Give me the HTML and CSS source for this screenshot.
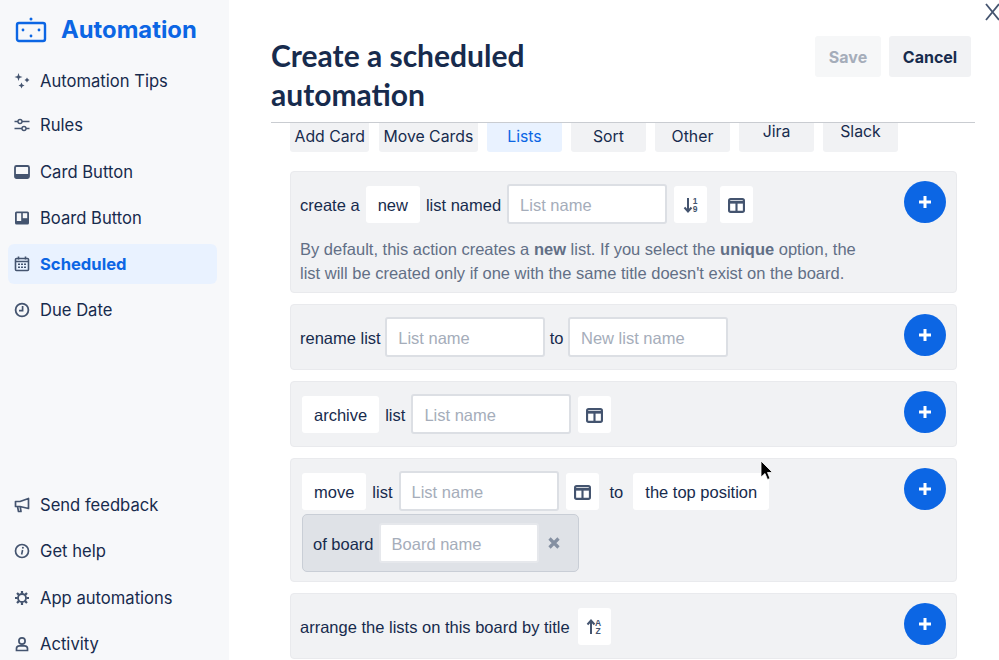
FILE: index.html
```html
<!DOCTYPE html>
<html lang="en">
<head>
<meta charset="utf-8">
<title>Create a scheduled automation</title>
<link rel="stylesheet" href="styles.css">
</head>
<body>
<aside class="sidebar">
  <div class="brand">
    <svg class="brand-icon" viewBox="0 0 32 26" width="32" height="26"><rect x="2" y="6" width="28" height="18" rx="2" fill="none" stroke="#0c66e4" stroke-width="2.4"/><circle cx="16" cy="2" r="1.5" fill="#0c66e4"/><circle cx="8" cy="13" r="1.4" fill="#0c66e4"/><circle cx="24" cy="13" r="1.4" fill="#0c66e4"/><circle cx="16" cy="19" r="1.4" fill="#0c66e4"/></svg>
    <span class="brand-name">Automation</span>
  </div>
  <nav class="nav">
    <a class="nav-item"><svg viewBox="0 0 16 16" width="16" height="16"><path d="M4.500 0 L5.500 3 L8.500 4 L5.500 5 L4.500 8 L3.500 5 L0.500 4 L3.500 3Z M13 4.500 L13.900 6.100 L15.500 7 L13.900 7.900 L13 9.500 L12.100 7.900 L10.500 7 L12.100 6.100Z M7.500 9.500 L8.400 11.600 L10.500 12.500 L8.400 13.400 L7.500 15.500 L6.600 13.400 L4.500 12.500 L6.600 11.600Z" fill="#44546f"/></svg>Automation Tips</a>
    <a class="nav-item"><svg viewBox="0 0 16 16" width="16" height="16"><path d="M0.500 4.500H4M8 4.500H15.500M0.500 11.500H8M12 11.500H15.500" stroke="#44546f" stroke-width="1.600" fill="none"/><circle cx="6" cy="4.500" r="2" fill="none" stroke="#44546f" stroke-width="1.400"/><circle cx="10" cy="11.500" r="2" fill="none" stroke="#44546f" stroke-width="1.400"/></svg>Rules</a>
    <a class="nav-item"><svg viewBox="0 0 16 16" width="16" height="16"><rect x="1" y="2" width="14" height="12" rx="1.500" fill="none" stroke="#44546f" stroke-width="1.800"/><path d="M1 10H15V14H1Z" fill="#44546f"/></svg>Card Button</a>
    <a class="nav-item"><svg viewBox="0 0 16 16" width="16" height="16"><rect x="1" y="1.500" width="14" height="13" rx="1.500" fill="#44546f"/><rect x="2.800" y="3.200" width="4.400" height="7.800" fill="#f7f8fa"/><rect x="8.800" y="3.200" width="4.400" height="5" fill="#f7f8fa"/></svg>Board Button</a>
    <a class="nav-item is-active"><svg viewBox="0 0 16 16" width="16" height="16"><rect x="1.500" y="2.500" width="13" height="12" rx="1" fill="none" stroke="#44546f" stroke-width="1.600"/><path d="M4.500 0.500V3.500M11.500 0.500V3.500M1.500 5.500H14.500" stroke="#44546f" stroke-width="1.600"/><path d="M4 7.500h2v1.500H4zM7 7.500h2v1.500H7zM10 7.500h2v1.500h-2zM4 10.500h2V12H4zM7 10.500h2V12H7zM10 10.500h2V12h-2z" fill="#44546f"/></svg>Scheduled</a>
    <a class="nav-item"><svg viewBox="0 0 16 16" width="16" height="16"><circle cx="8" cy="8" r="6.400" fill="none" stroke="#44546f" stroke-width="1.800"/><path d="M8.600 4V8.700H5" fill="none" stroke="#44546f" stroke-width="1.700"/></svg>Due Date</a>
  </nav>
  <nav class="nav nav-bottom">
    <a class="nav-item"><svg viewBox="0 0 16 16" width="16" height="16"><path d="M14.500 1.500V11.500L6 9.500H1.500V4.500H6Z M3.500 9.500L4.500 14.500H7L6.200 9.700" fill="none" stroke="#44546f" stroke-width="1.700" stroke-linejoin="round"/></svg>Send feedback</a>
    <a class="nav-item"><svg viewBox="0 0 16 16" width="16" height="16"><circle cx="8" cy="8" r="6.500" fill="none" stroke="#44546f" stroke-width="1.700"/><path d="M8.600 7L7.600 11.500" stroke="#44546f" stroke-width="1.600"/><circle cx="8.900" cy="4.800" r="1" fill="#44546f"/></svg>Get help</a>
    <a class="nav-item"><svg viewBox="0 0 16 16" width="16" height="16"><circle cx="8" cy="8" r="4" fill="none" stroke="#44546f" stroke-width="1.800"/><path d="M8 1V3.600M8 12.400V15M1 8H3.600M12.400 8H15M3 3L4.900 4.900M11.100 11.100L13 13M13 3L11.100 4.900M4.900 11.100L3 13" stroke="#44546f" stroke-width="2.200"/></svg>App automations</a>
    <a class="nav-item"><svg viewBox="0 0 16 16" width="16" height="16"><circle cx="8" cy="5" r="3.100" fill="none" stroke="#44546f" stroke-width="1.700"/><path d="M2.500 14.500V12.600C2.500 10.900 3.900 9.800 5.500 9.800H10.500C12.100 9.800 13.500 10.900 13.500 12.600V14.500Z" fill="none" stroke="#44546f" stroke-width="1.700"/></svg>Activity</a>
  </nav>
</aside>

<main class="main">
  <header class="header">
    <h1 class="title">Create a scheduled automation</h1>
    <div class="actions">
      <button class="btn btn-save">Save</button>
      <button class="btn btn-cancel">Cancel</button>
    </div>
  </header>

  <div class="tabs">
    <span class="tab">Add Card</span>
    <span class="tab">Move Cards</span>
    <span class="tab is-active">Lists</span>
    <span class="tab">Sort</span>
    <span class="tab">Other</span>
    <span class="tab tab-raised">Jira</span>
    <span class="tab tab-raised">Slack</span>
  </div>

  <div class="cards">
    <section class="card">
      <div class="card-body">
        <div class="row">
          <span>create a</span>
          <span class="chip">new</span>
          <span>list named</span>
          <span class="field">List name</span>
          <span class="icon-btn"><svg viewBox="0 0 16 18" width="16" height="18"><path d="M5 2V15M1.500 11.500L5 15.500L8.500 11.500" fill="none" stroke="#44546f" stroke-width="2"/><text x="12" y="7.500" class="mini">1</text><text x="12" y="16" class="mini">9</text></svg></span>
          <span class="icon-btn icon-btn-far"><svg viewBox="0 0 16 14" width="17" height="15"><rect x="1" y="1" width="14" height="12" rx="1.500" fill="none" stroke="#44546f" stroke-width="2"/><path d="M1 4H15" stroke="#44546f" stroke-width="2.500"/><path d="M8 4V13" stroke="#44546f" stroke-width="2"/></svg></span>
        </div>
        <p class="note">By default, this action creates a <b>new</b> list. If you select the <b>unique</b> option, the list will be created only if one with the same title doesn't exist on the board.</p>
      </div>
      <button class="add"><svg viewBox="0 0 14 14" width="14" height="14"><path d="M7 1V13M1 7H13" stroke="#fff" stroke-width="3"/></svg></button>
    </section>

    <section class="card">
      <div class="card-body">
        <div class="row row-tight">
          <span>rename list</span>
          <span class="field">List name</span>
          <span>to</span>
          <span class="field">New list name</span>
        </div>
      </div>
      <button class="add"><svg viewBox="0 0 14 14" width="14" height="14"><path d="M7 1V13M1 7H13" stroke="#fff" stroke-width="3"/></svg></button>
    </section>

    <section class="card">
      <div class="card-body">
        <div class="row row-inset">
          <span class="chip">archive</span>
          <span>list</span>
          <span class="field">List name</span>
          <span class="icon-btn"><svg viewBox="0 0 16 14" width="17" height="15"><rect x="1" y="1" width="14" height="12" rx="1.500" fill="none" stroke="#44546f" stroke-width="2"/><path d="M1 4H15" stroke="#44546f" stroke-width="2.500"/><path d="M8 4V13" stroke="#44546f" stroke-width="2"/></svg></span>
        </div>
      </div>
      <button class="add"><svg viewBox="0 0 14 14" width="14" height="14"><path d="M7 1V13M1 7H13" stroke="#fff" stroke-width="3"/></svg></button>
    </section>

    <section class="card">
      <div class="card-body">
        <div class="row row-inset">
          <span class="chip">move</span>
          <span>list</span>
          <span class="field">List name</span>
          <span class="icon-btn"><svg viewBox="0 0 16 14" width="17" height="15"><rect x="1" y="1" width="14" height="12" rx="1.500" fill="none" stroke="#44546f" stroke-width="2"/><path d="M1 4H15" stroke="#44546f" stroke-width="2.500"/><path d="M8 4V13" stroke="#44546f" stroke-width="2"/></svg></span>
          <span class="to">to</span>
          <span class="chip">the top position</span>
        </div>
        <div class="sub">
          <span>of board</span>
          <span class="field field-plain">Board name</span>
          <svg class="sub-x" viewBox="0 0 12 12" width="12" height="12"><path d="M1.500 1.500L10.500 10.500M10.500 1.500L1.500 10.500" stroke="#8590a2" stroke-width="3.200"/></svg>
        </div>
      </div>
      <button class="add"><svg viewBox="0 0 14 14" width="14" height="14"><path d="M7 1V13M1 7H13" stroke="#fff" stroke-width="3"/></svg></button>
    </section>

    <section class="card">
      <div class="card-body">
        <div class="row">
          <span>arrange the lists on this board by title</span>
          <span class="icon-btn icon-btn-near"><svg viewBox="0 0 16 18" width="16" height="18"><path d="M5 16V3M1.500 6.500L5 2.500L8.500 6.500" fill="none" stroke="#44546f" stroke-width="2"/><text x="12" y="7.500" class="mini">A</text><text x="12" y="16" class="mini">Z</text></svg></span>
        </div>
      </div>
      <button class="add"><svg viewBox="0 0 14 14" width="14" height="14"><path d="M7 1V13M1 7H13" stroke="#fff" stroke-width="3"/></svg></button>
    </section>
  </div>
</main>

<svg class="close" viewBox="0 0 14 20" width="14" height="20"><path d="M1 2L14 18M14 2L1 18" stroke="#44546f" stroke-width="1.800" fill="none"/></svg>
<svg class="cursor" viewBox="0 0 14 22" width="14" height="22"><path d="M1 1V17L5 13.500L7.500 19.500L10 18.500L7.500 12.500H12.500Z" fill="#000" stroke="#fff" stroke-width="0.800"/></svg>
</body>
</html>
```
FILE: styles.css
```css
* { box-sizing: border-box; }
html, body { margin: 0; height: 100%; }
body {
  display: flex;
  height: 660px;
  overflow: hidden;
  font-family: Inter, "Liberation Sans", sans-serif;
  font-size: 16px;
  color: #172b4d;
  background: #fff;
}

.sidebar {
  width: 229px;
  flex: none;
  background: #f7f8fa;
  padding: 15px 12px 0 8px;
  display: flex;
  flex-direction: column;
  font-size: 16.6px;
}
.brand {
  display: flex;
  align-items: center;
  gap: 14px;
  height: 32px;
  padding-left: 7px;
  color: #0c66e4;
}
.brand-name { font-size: 23.8px; font-weight: 700; }
.nav { display: flex; flex-direction: column; gap: 6px; margin-top: 17px; }
.nav-bottom { margin-top: 155px; gap: 6.3px; }
.nav-item {
  display: flex;
  align-items: center;
  gap: 10px;
  height: 40px;
  padding-left: 6px;
  border-radius: 6px;
}
.nav-item:nth-child(1) { margin-bottom: -2px; }
.nav-item:nth-child(2) { margin-bottom: 1px; }
.nav-bottom .nav-item:nth-child(n) { margin-bottom: 0; }
.nav-item.is-active { background: #e9f2ff; color: #0c66e4; font-weight: 700; }

.main { flex: 1; min-width: 0; padding: 0 24px 0 42px; }
.header {
  height: 123px;
  border-bottom: 1px solid #c9ccd1;
  display: flex;
  justify-content: space-between;
  padding: 36px 4px 0 0;
}
.title {
  margin: 0;
  width: 300px;
  font-family: Lato, sans-serif;
  font-size: 30px;
  font-weight: 700;
  line-height: 39px;
}
.actions { display: flex; gap: 8px; }
.btn {
  height: 41px;
  border: 0;
  border-radius: 3px;
  font: 700 16px Inter, "Liberation Sans", sans-serif;
  padding: 0;
}
.btn-save { width: 66px; background: #f6f7f8; color: #a5adba; }
.btn-cancel { width: 82px; background: #f1f2f4; color: #172b4d; }

.tabs { display: flex; height: 29px; gap: 9.5px; padding-left: 19px; font-size: 15.8px; }
.tab {
  min-width: 74.5px;
  height: 29px;
  padding: 0 4.5px 2px;
  display: flex;
  align-items: center;
  justify-content: center;
  background: #f1f2f4;
  border-radius: 0 0 3px 3px;
}
.tab.is-active { background: #e9f2ff; color: #0c66e4; }
.tab-raised { padding-bottom: 13px; }

.cards {
  display: flex;
  flex-direction: column;
  gap: 11px;
  margin: 19px 18px 0 19px;
  font-family: "Liberation Sans", Arial, sans-serif;
  font-size: 16.5px;
}
.card {
  display: flex;
  justify-content: space-between;
  min-height: 66px;
  padding: 9px 10px 9px 9px;
  background: #f1f2f4;
  border: 1px solid #e9eaed;
  border-radius: 4px;
}
.card-body { padding-top: 3px; flex: 1; min-width: 0; }
.row { display: flex; align-items: center; gap: 6px; height: 40px; }
.row-tight { gap: 4.5px; }
.row-inset { padding-left: 2px; }
.row > span, .sub > span { padding-top: 2px; }
.chip {
  height: 37px;
  display: flex;
  align-items: center;
  padding: 0 12px;
  background: #fff;
  border-radius: 3px;
}
.field {
  width: 160px;
  height: 40px;
  display: flex;
  align-items: center;
  padding-left: 11px;
  background: #fff;
  border: 2px solid #dcdfe4;
  border-radius: 3px;
  color: #a5adba;
}
.icon-btn {
  width: 33px;
  height: 37px;
  margin-left: 1px;
  display: flex;
  align-items: center;
  justify-content: center;
  background: #fff;
  border-radius: 3px;
}
.icon-btn-far { margin-left: 7px; }
.icon-btn-near { margin-left: 2px; }
.mini { font: 700 8.5px "Liberation Sans", Arial, sans-serif; fill: #44546f; text-anchor: middle; }
.to { margin: 0 4px 0 5px; }
.note {
  margin: 13px 0 -2px;
  width: 570px;
  line-height: 24px;
  color: #626f86;
}
.note b { font-weight: 700; }
.sub {
  width: 277px;
  height: 58px;
  margin: 3px 0 0 2px;
  display: flex;
  align-items: center;
  gap: 5px;
  padding-left: 10px;
  background: #dfe2e7;
  border: 1px solid #c9ced6;
  border-radius: 5px;
}
.field-plain { border-color: #e6e8ec; }
.sub-x { margin-left: 4px; }
.add {
  width: 42px;
  height: 42px;
  flex: none;
  padding: 0;
  border: 0;
  border-radius: 50%;
  background: #0c66e4;
  display: flex;
  align-items: center;
  justify-content: center;
}

.close { position: absolute; left: 985px; top: 2px; }
.cursor { position: absolute; left: 760px; top: 460px; }
```
